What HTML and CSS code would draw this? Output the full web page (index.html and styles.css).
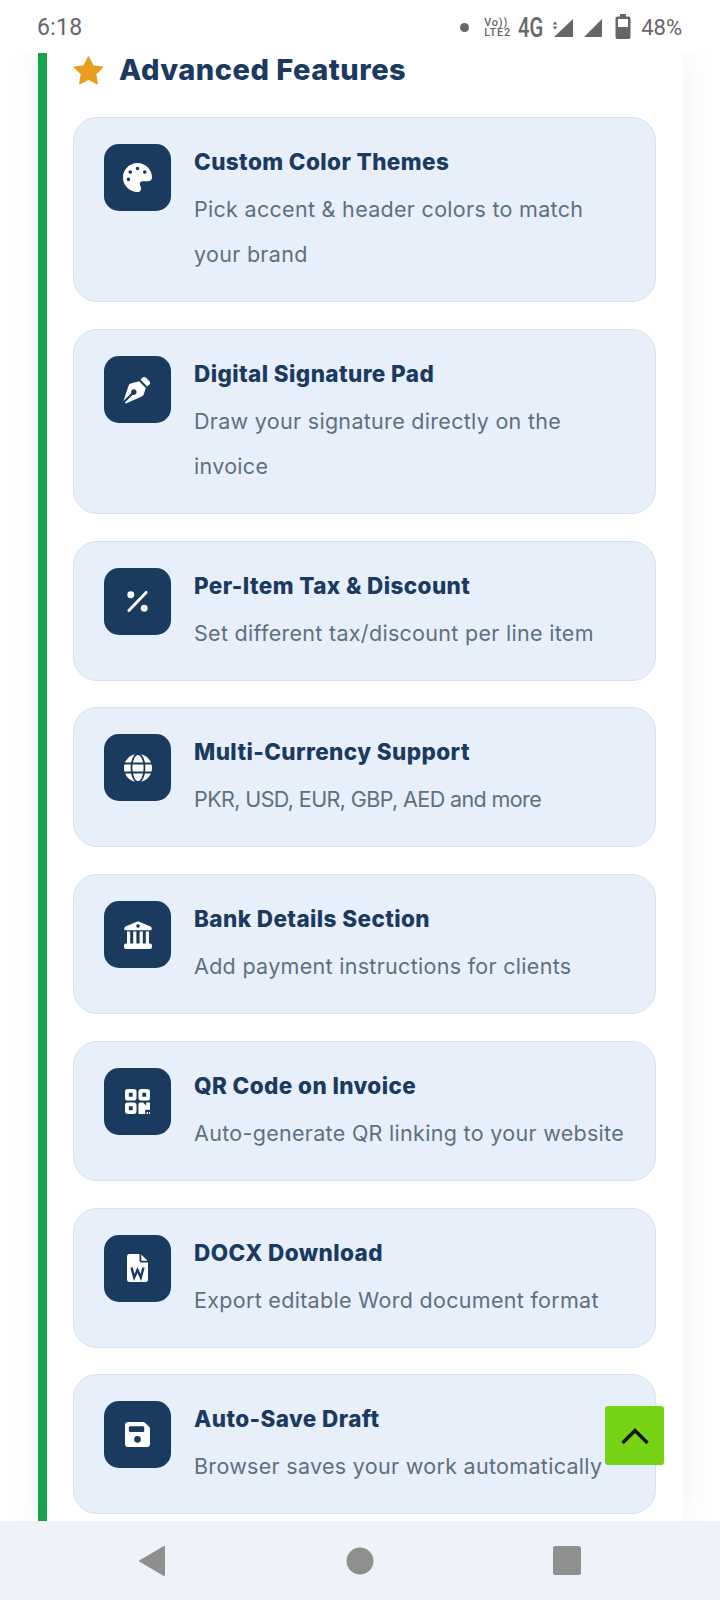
FILE: index.html
```html
<!DOCTYPE html>
<html lang="en">
<head>
  <meta charset="UTF-8" />
  <title>Advanced Features</title>
  <link rel="stylesheet" href="styles.css">
</head>
<body>
  <div class="status-bar">
    <span class="clock">6:18</span>
    <div class="status-icons">
      <span class="dot"></span>
      <span class="volte">Vo))<br>LTE2</span>
      <span class="net">4G</span>
      <svg class="sig-a" width="21" height="18" viewBox="0 0 21 18"><path d="M3 2.500l2.300 3H.7zM3 10.500L.7 7.500h4.600z" fill="#666"/><path d="M21 0v18H2z" fill="#666"/></svg>
      <svg class="sig-b" width="18" height="18" viewBox="0 0 18 18"><path d="M18 0v18H0z" fill="#666"/></svg>
      <svg class="batt-icon" width="16" height="25" viewBox="0 0 16 25"><path d="M5 0h6v2.500h2.500A2 2 0 0 1 15.500 4.500V23a2 2 0 0 1-2 2h-11a2 2 0 0 1-2-2V4.500a2 2 0 0 1 2-2H5zM3 5v8h10V5z" fill="#666"/></svg>
      <span class="batt">48%</span>
    </div>
  </div>

  <main class="page">
    <section class="panel">
      <h2 class="panel-title">
        <svg class="star" viewBox="0 0 30 28"><path d="M15 1l4.200 8.600 9.300 1.300-6.800 6.500 1.700 9.300-8.400-4.500-8.400 4.500 1.700-9.300-6.800-6.500 9.300-1.300z" fill="#e89d1f" stroke="#e89d1f" stroke-width="1.500" stroke-linejoin="round"/></svg>
        Advanced Features
      </h2>

      <div class="feature">
        <div class="feature-icon">
          <svg width="29" height="29" viewBox="0 0 512 512"><path fill="#fff" d="M512 256c0 .9 0 1.800 0 2.700c-.4 36.500-33.600 61.300-70.100 61.300H344c-26.500 0-48 21.500-48 48c0 3.400 .4 6.700 1 9.900c2.100 10.200 6.500 20 10.800 29.900c6.100 13.800 12.100 27.500 12.100 42c0 31.800-21.600 60.700-53.400 62c-3.500 .1-7 .2-10.600 .2C114.600 512 0 397.400 0 256S114.600 0 256 0S512 114.600 512 256zM128 288a32 32 0 1 0 -64 0 32 32 0 1 0 64 0zm0-96a32 32 0 1 0 0-64 32 32 0 1 0 0 64zM288 96a32 32 0 1 0 -64 0 32 32 0 1 0 64 0zm96 96a32 32 0 1 0 0-64 32 32 0 1 0 0 64z"/></svg>
        </div>
        <div class="feature-text">
          <h3>Custom Color Themes</h3>
          <p>Pick accent &amp; header colors to match your brand</p>
        </div>
      </div>

      <div class="feature">
        <div class="feature-icon">
          <svg width="29" height="29" viewBox="0 0 28 28"><path fill="#fff" d="M18.300 3a2.800 2.800 0 0 1 4-.3l3 3a2.800 2.800 0 0 1-.3 4l-1.600 1.400-6.500-6.500zM15.500 6l6.500 6.500-2 6.300a3 3 0 0 1-1.900 1.900L2.800 27.500l-1-.9 7.600-7.600a2.700 2.700 0 1 0-1.500-1.500L.4 25.100 5.500 10a3 3 0 0 1 1.900-1.900z"/></svg>
        </div>
        <div class="feature-text">
          <h3>Digital Signature Pad</h3>
          <p>Draw your signature directly on the invoice</p>
        </div>
      </div>

      <div class="feature">
        <div class="feature-icon">
          <svg width="23" height="23" viewBox="0 0 24 24"><circle cx="5" cy="5" r="3.600" fill="#fff"/><circle cx="19" cy="19" r="3.600" fill="#fff"/><path d="M21 2.500L3 21.500" stroke="#fff" stroke-width="3" stroke-linecap="round"/></svg>
        </div>
        <div class="feature-text">
          <h3>Per-Item Tax &amp; Discount</h3>
          <p>Set different tax/discount per line item</p>
        </div>
      </div>

      <div class="feature">
        <div class="feature-icon">
          <svg width="28" height="28" viewBox="0 0 28 28"><circle cx="14" cy="14" r="14" fill="#fff"/><g fill="none" stroke="#1a3a5f" stroke-width="1.800"><ellipse cx="14" cy="14" rx="6.500" ry="14"/><path d="M0 9.500h28M0 18.500h28"/></g></svg>
        </div>
        <div class="feature-text">
          <h3>Multi-Currency Support</h3>
          <p class="caps">PKR, USD, EUR, GBP, AED and more</p>
        </div>
      </div>

      <div class="feature">
        <div class="feature-icon">
          <svg width="28" height="28" viewBox="0 0 28 28"><path fill="#fff" d="M14 .3l12.500 5.200a2 2 0 0 1 1.200 1.800V8a1.300 1.300 0 0 1-1.300 1.300H1.600A1.300 1.300 0 0 1 .3 8v-.7a2 2 0 0 1 1.200-1.800z"/><circle cx="14" cy="5" r="1.800" fill="#1a3a5f"/><path fill="#fff" d="M3 10.500h3.200v12H3zM9.200 10.500h3.200v12H9.200zM15.600 10.500h3.200v12h-3.200zM21.800 10.500H25v12h-3.200zM2 22.500h24a2 2 0 0 1 2 2V26a2 2 0 0 1-2 2H2a2 2 0 0 1-2-2v-1.500a2 2 0 0 1 2-2z"/></svg>
        </div>
        <div class="feature-text">
          <h3>Bank Details Section</h3>
          <p>Add payment instructions for clients</p>
        </div>
      </div>

      <div class="feature">
        <div class="feature-icon">
          <svg width="25" height="25" viewBox="0 0 26 26"><path fill="#fff" fill-rule="evenodd" d="M3 0h6a3 3 0 0 1 3 3v6a3 3 0 0 1-3 3H3a3 3 0 0 1-3-3V3a3 3 0 0 1 3-3zM4 4v4h4V4zM17 0h6a3 3 0 0 1 3 3v6a3 3 0 0 1-3 3h-6a3 3 0 0 1-3-3V3a3 3 0 0 1 3-3zM18 4v4h4V4zM3 14h6a3 3 0 0 1 3 3v6a3 3 0 0 1-3 3H3a3 3 0 0 1-3-3v-6a3 3 0 0 1 3-3zM4 18v4h4v-4zM14 16a2 2 0 0 1 2-2h3l3 3.500V14h4v7.500h-5V26h-7z"/><path fill="#fff" d="M22.500 24h1.500v2h-1.500zM25 24h1v2h-1z"/></svg>
        </div>
        <div class="feature-text">
          <h3>QR Code on Invoice</h3>
          <p>Auto-generate QR linking to your website</p>
        </div>
      </div>

      <div class="feature">
        <div class="feature-icon">
          <svg width="21" height="28" viewBox="0 0 21 28"><path fill="#fff" d="M2.500 0H12.500v6.500a2 2 0 0 0 2 2H21v17a2.500 2.500 0 0 1-2.500 2.500h-16A2.500 2.500 0 0 1 0 25.500v-23A2.500 2.500 0 0 1 2.500 0zM14.300 .5L20.500 6.800h-6.200z"/><path fill="none" stroke="#1a3a5f" stroke-width="2.400" stroke-linejoin="miter" d="M4.500 13.500l2.700 10 3.300-7.500 3.300 7.500 2.700-10"/></svg>
        </div>
        <div class="feature-text">
          <h3>DOCX Download</h3>
          <p>Export editable Word document format</p>
        </div>
      </div>

      <div class="feature">
        <div class="feature-icon">
          <svg width="25" height="25" viewBox="0 0 26 26"><path fill="#fff" fill-rule="evenodd" d="M3.500 0h15.300a3 3 0 0 1 2.200.9l4.100 4.100a3 3 0 0 1 .9 2.200v15.300a3.500 3.500 0 0 1-3.500 3.500h-19A3.500 3.500 0 0 1 0 22.500v-19A3.500 3.500 0 0 1 3.500 0zM5.500 4.500a1.500 1.500 0 0 0-1.500 1.500v3a1.500 1.500 0 0 0 1.500 1.500h13A1.500 1.500 0 0 0 20 9V6a1.500 1.500 0 0 0-1.500-1.500zM13 21.500a3.500 3.500 0 1 0 0-7 3.500 3.500 0 0 0 0 7z"/></svg>
        </div>
        <div class="feature-text">
          <h3>Auto-Save Draft</h3>
          <p>Browser saves your work automatically</p>
        </div>
      </div>
    </section>
  </main>

  <button class="to-top">
    <svg width="30" height="18" viewBox="0 0 30 18"><path d="M2.500 16L15 3.500 27.500 16" fill="none" stroke="#111" stroke-width="3.500"/></svg>
  </button>

  <nav class="nav-bar">
    <svg width="28" height="32" viewBox="0 0 28 32"><path d="M26 2v28L2 16z" fill="#8f8f8f" stroke="#8f8f8f" stroke-width="2" stroke-linejoin="round"/></svg>
    <svg width="28" height="28" viewBox="0 0 28 28"><circle cx="14" cy="14" r="13.500" fill="#8f8f8f"/></svg>
    <svg width="28" height="29" viewBox="0 0 28 29"><rect width="28" height="29" rx="2.500" fill="#8f8f8f"/></svg>
  </nav>
</body>
</html>
```

FILE: styles.css
```css
* {
  box-sizing: border-box;
}

html, body {
  margin: 0;
  height: 1600px;
}

body {
  display: flex;
  flex-direction: column;
  position: relative;
  overflow: hidden;
  font-family: Inter, 'Noto Sans', sans-serif;
  background: #fff;
}

.status-bar {
  height: 53px;
  flex-shrink: 0;
  display: flex;
  justify-content: space-between;
  align-items: center;
  padding: 2px 38px 0 37px;
  background: #fff;
  color: #666;
  font-family: Roboto, sans-serif;
  position: relative;
  z-index: 2;
}

.clock {
  font-size: 23px;
  letter-spacing: 0.3px;
}

.status-icons {
  display: flex;
  align-items: center;
}

.dot {
  width: 9px;
  height: 9px;
  border-radius: 50%;
  background: #666;
  margin-right: 15px;
}

.volte {
  width: 28px;
  font-size: 11px;
  line-height: 10px;
  font-weight: 500;
  letter-spacing: 0.8px;
  white-space: nowrap;
}

.net {
  width: 27px;
  margin-left: 6px;
  font-size: 28px;
  line-height: 28px;
  font-weight: 500;
  display: inline-block;
  transform: scaleX(0.72);
  transform-origin: left center;
  white-space: nowrap;
}

.sig-a {
  margin-left: 7px;
}

.sig-b {
  margin-left: 11px;
}

.batt-icon {
  margin-left: 13px;
  margin-top: -3px;
}

.batt {
  font-size: 22px;
  margin-left: 10px;
}

.page {
  flex: 1;
  min-height: 0;
  overflow: hidden;
  padding: 0 37px 0 38px;
}

.panel {
  background: #fff;
  border-left: 9px solid #16a34a;
  padding: 0 27px 0 26px;
  height: 100%;
  box-shadow: 0 0 30px rgba(26, 58, 95, 0.08);
}

.panel-title {
  display: flex;
  align-items: center;
  gap: 15px;
  margin: 0 0 31px;
  height: 33px;
  font-size: 29px;
  font-weight: 800;
  letter-spacing: 0.5px;
  color: #1a3a5f;
  white-space: nowrap;
}

.star {
  width: 31px;
  height: 29px;
  margin-top: 2px;
}

.feature {
  display: flex;
  gap: 23px;
  padding: 26px 30px 24px;
  margin-bottom: 26.75px;
  background: #e6effa;
  border: 1px solid #d5e2f1;
  border-radius: 24px;
}

.feature-icon {
  width: 67px;
  height: 67px;
  flex-shrink: 0;
  display: flex;
  align-items: center;
  justify-content: center;
  background: #1a3a5f;
  border-radius: 15px;
}

.feature-text h3 {
  margin: 0 0 8px;
  padding-top: 1px;
  font-size: 22.5px;
  line-height: 34px;
  font-weight: 800;
  letter-spacing: 0.4px;
  color: #1a3a5f;
  white-space: nowrap;
}

.feature-text p {
  margin: 0;
  font-size: 21.5px;
  line-height: 45px;
  letter-spacing: 0.3px;
  color: #5f6f80;
}

.feature-text p.caps {
  letter-spacing: -0.6px;
}

.to-top {
  position: absolute;
  left: 605px;
  top: 1406px;
  width: 59px;
  height: 59px;
  padding: 0;
  border: none;
  border-radius: 3px;
  background: #76d316;
  display: flex;
  align-items: center;
  justify-content: center;
}

.nav-bar {
  height: 79px;
  flex-shrink: 0;
  display: flex;
  align-items: center;
  justify-content: space-between;
  padding: 0 139px 0 138px;
  background: #eff3f9;
  position: relative;
  z-index: 2;
}
```
